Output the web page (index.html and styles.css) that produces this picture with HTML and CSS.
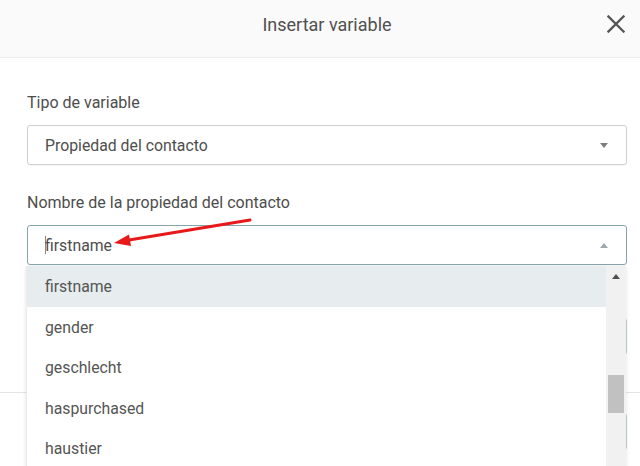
FILE: index.html
```html
<!DOCTYPE html>
<html lang="es">
<head>
<meta charset="utf-8">
<title>Insertar variable</title>
<link rel="stylesheet" href="styles.css">
</head>
<body>
<div class="modal">
  <header class="modal-header">
    <span></span>
    <h1 class="modal-title">Insertar variable</h1>
    <button class="close" aria-label="Cerrar">
      <svg width="18" height="18" viewBox="0 0 18 18"><path d="M1.5 1.5 L16.5 16.5 M16.5 1.5 L1.5 16.5" stroke="#555" stroke-width="2.3" stroke-linecap="square" fill="none"/></svg>
    </button>
  </header>
  <div class="modal-body">
    <div class="field">
      <label class="label">Tipo de variable</label>
      <div class="select">
        <span class="value">Propiedad del contacto</span>
        <span class="tri tri-down"></span>
      </div>
    </div>
    <div class="field field-2">
      <label class="label">Nombre de la propiedad del contacto</label>
      <div class="select focused">
        <span class="value"><span class="cursor"></span>firstname</span>
        <span class="tri tri-up"></span>
      </div>
    </div>
    <div class="ghost-box"></div>
  </div>
  <footer class="modal-footer">
    <div class="ghost-btn"></div>
  </footer>

  <div class="dropdown">
    <ul class="options">
      <li class="option active">firstname</li>
      <li class="option">gender</li>
      <li class="option">geschlecht</li>
      <li class="option">haspurchased</li>
      <li class="option">haustier</li>
    </ul>
    <div class="scrollbar">
      <span class="sb-up"></span>
      <span class="sb-thumb"></span>
    </div>
  </div>

  <svg class="annot" width="640" height="466" viewBox="0 0 640 466">
    <line x1="250" y1="220" x2="126" y2="240.5" stroke="#e8191a" stroke-width="3" stroke-linecap="round"/>
    <polygon points="114,243 129,234.5 131,246" fill="#e8191a"/>
  </svg>
</div>
</body>
</html>
```
FILE: styles.css
```css
* { box-sizing: border-box; }
html, body { margin: 0; padding: 0; }
body {
  width: 640px;
  height: 466px;
  overflow: hidden;
  background: #fff;
  font-family: Roboto, "Liberation Sans", Arial, sans-serif;
  color: #555;
}
.modal {
  position: relative;
  width: 640px;
  height: 466px;
  background: #fff;
}
.modal-header {
  height: 58px;
  background: #fafafa;
  border-bottom: 1px solid #ececec;
  display: grid;
  grid-template-columns: 1fr auto 1fr;
  align-items: center;
}
.modal-title {
  margin: 0;
  font-size: 18px;
  font-weight: 400;
  color: #505050;
  padding-left: 14px;
  padding-bottom: 8px;
}
.close {
  justify-self: end;
  margin-right: 15px;
  margin-bottom: 10px;
  width: 18px;
  height: 18px;
  padding: 0;
  border: 0;
  background: none;
  display: flex;
}
.modal-body {
  padding: 35px 13px 0 27px;
}
.field { display: flex; flex-direction: column; }
.field-2 { margin-top: 28px; }
.label {
  font-size: 16px;
  line-height: 20px;
  color: #4d4d4d;
  margin-bottom: 12px;
}
.select {
  height: 40px;
  border: 1px solid #cfcfcf;
  border-radius: 3px;
  display: flex;
  align-items: center;
  justify-content: space-between;
  padding: 0 18px 0 17px;
  box-shadow: 0 1px 1px rgba(0,0,0,0.04);
}
.select.focused { border-color: #86a4ac; }
.value {
  font-size: 15.8px;
  color: #4d4d4d;
  display: flex;
  align-items: center;
}
.cursor {
  width: 1px;
  height: 18px;
  background: #888;
  margin-right: -1px;
}
.tri { width: 0; height: 0; border-left: 4.5px solid transparent; border-right: 4.5px solid transparent; }
.tri-down { border-top: 5px solid #7d7d7d; }
.tri-up { border-bottom: 5px solid #a0a8ab; }
.ghost-box {
  margin-top: 53px;
  height: 37px;
  border: 1px solid #c3d0d4;
  border-radius: 3px;
}
.modal-footer {
  margin-top: 37px;
  border-top: 1px solid #e4e4e4;
  padding: 20px 13px 0 27px;
  display: flex;
  justify-content: flex-end;
}
.ghost-btn {
  width: 120px;
  height: 37px;
  border: 1px solid #c3d0d4;
  border-radius: 3px;
}
.dropdown {
  position: absolute;
  left: 26px;
  top: 266px;
  width: 600px;
  height: 200px;
  display: flex;
  background: #fff;
  border-left: 1px solid #ececec;
  box-shadow: 0 2px 4px rgba(0,0,0,0.12);
}
.options {
  list-style: none;
  margin: 0;
  padding: 0;
  flex: 1;
}
.option {
  height: 40.5px;
  display: flex;
  align-items: center;
  padding-left: 18px;
  padding-top: 1px;
  font-size: 15.8px;
  color: #555;
}
.option.active { background: #e7ecee; }
.scrollbar {
  position: relative;
  width: 20px;
  background: #f1f1f1;
}
.sb-up {
  position: absolute;
  left: 6px;
  top: 8px;
  width: 0; height: 0;
  border-left: 4px solid transparent;
  border-right: 4px solid transparent;
  border-bottom: 5px solid #505050;
}
.sb-thumb {
  position: absolute;
  left: 2px;
  top: 109px;
  width: 16px;
  height: 38px;
  background: #c1c1c1;
}
.annot {
  position: absolute;
  left: 0;
  top: 0;
  pointer-events: none;
}
```
